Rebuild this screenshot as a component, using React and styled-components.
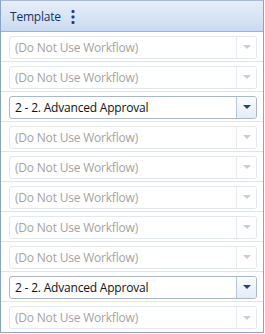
import styled, { createGlobalStyle } from "styled-components";

const GlobalStyle = createGlobalStyle`
  html, body {
    margin: 0;
    padding: 0;
    background: #ffffff;
    font-family: "Open Sans", "Liberation Sans", sans-serif;
  }
`;

const rows = [
  { label: "(Do Not Use Workflow)", active: false },
  { label: "(Do Not Use Workflow)", active: false },
  { label: "2 - 2. Advanced Approval", active: true },
  { label: "(Do Not Use Workflow)", active: false },
  { label: "(Do Not Use Workflow)", active: false },
  { label: "(Do Not Use Workflow)", active: false },
  { label: "(Do Not Use Workflow)", active: false },
  { label: "(Do Not Use Workflow)", active: false },
  { label: "2 - 2. Advanced Approval", active: true },
  { label: "(Do Not Use Workflow)", active: false },
];

function App() {
  return (
    <>
      <GlobalStyle />
      <Grid>
        <Header>
          <span>Template</span>
          <Dots viewBox="0 0 4 14" width="4" height="14">
            <rect x="0.5" y="0" width="3" height="3" rx="1" />
            <rect x="0.5" y="5.5" width="3" height="3" rx="1" />
            <rect x="0.5" y="11" width="3" height="3" rx="1" />
          </Dots>
        </Header>
        {rows.map((row, index) => (
          <Row key={index}>
            <Select $active={row.active}>
              <Value $active={row.active}>{row.label}</Value>
              <Button $active={row.active}>
                <svg width="8" height="4" viewBox="0 0 8 4">
                  <path d="M0 0 L8 0 L4 4 Z" fill={row.active ? "#2b4171" : "#c8ced6"} />
                </svg>
              </Button>
            </Select>
          </Row>
        ))}
      </Grid>
    </>
  );
}

export default App;

const Grid = styled.div`
  width: 262px;
  border: 1px solid #8aa3c4;
  border-top-color: #a7bcd8;
  display: flex;
  flex-direction: column;
`;

const Header = styled.div`
  height: 30px;
  display: flex;
  align-items: center;
  gap: 10px;
  padding-left: 9px;
  background: linear-gradient(to bottom, #e6eef9 0%, #d9e5f5 50%, #c9daf0 100%);
  border-bottom: 1px solid #9ab3d3;
  span {
    font-size: 12px;
    color: #15306b;
    letter-spacing: -0.2px;
  }
`;

const Dots = styled.svg`
  fill: #1e3f84;
  margin-top: 1px;
`;

const Row = styled.div`
  height: 30px;
  box-sizing: border-box;
  border-bottom: 1px solid #dfe4ea;
  display: flex;
  align-items: center;
  padding: 1px 6px 0 8px;
  &:last-child {
    border-bottom: none;
  }
`;

const Select = styled.div`
  flex: 1;
  height: 23px;
  box-sizing: border-box;
  display: flex;
  align-items: stretch;
  border: 1px solid ${(p) => (p.$active ? "#a6b8ce" : "#e2e8ef")};
  border-radius: 3px;
  background: #ffffff;
  overflow: hidden;
`;

const Value = styled.div`
  flex: 1;
  display: flex;
  align-items: center;
  padding-left: 5px;
  font-size: 12px;
  letter-spacing: -0.2px;
  color: ${(p) => (p.$active ? "#111111" : "#a3a3a3")};
  white-space: nowrap;
`;

const Button = styled.div`
  width: 19px;
  display: flex;
  align-items: center;
  justify-content: center;
  border-left: 1px solid ${(p) => (p.$active ? "#b9c8da" : "#e6ebf1")};
  background: ${(p) =>
    p.$active ? "linear-gradient(to bottom, #fbfcfe 0%, #e4ecf6 100%)" : "#ffffff"};
`;
